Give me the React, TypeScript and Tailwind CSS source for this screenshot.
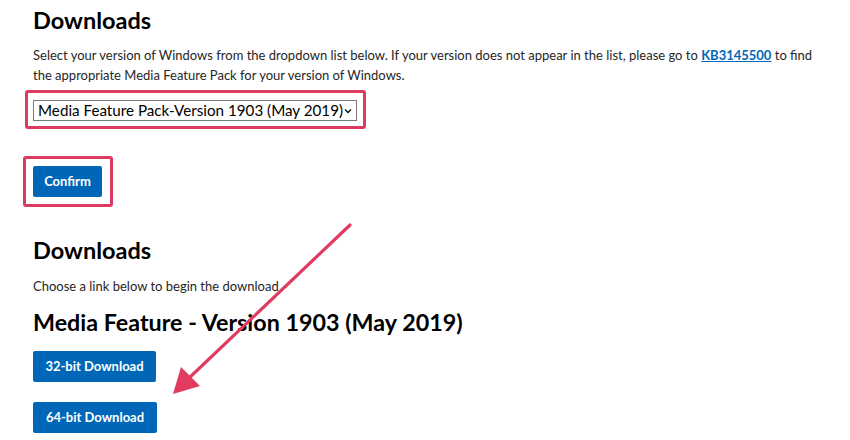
import React from 'react';

const font = { fontFamily: 'Lato, "Open Sans", sans-serif' };

function BlueButton({ label, width }: { label: string; width: string }) {
  return (
    <button
      className={`${width} h-[31px] bg-[#0067b8] text-white text-[13px] font-bold rounded-[2px] flex items-center justify-center`}
    >
      {label}
    </button>
  );
}

export default function App() {
  return (
    <div className="relative w-[850px] h-[440px] bg-white overflow-hidden text-[#1b1b1b]" style={font}>
      <div className="pl-[33px] flex flex-col items-start">
        {/* Downloads / version picker */}
        <h2 className="mt-[6px] text-[23.5px] leading-[28px] font-bold text-black">Downloads</h2>
        <p className="mt-[11px] text-[13px] leading-[20px] text-[#262626] whitespace-nowrap">
          Select your version of Windows from the dropdown list below. If your version does not appear in the list, please go to{' '}
          <a className="text-[#0067b8] font-bold underline">KB3145500</a> to find
          <br />
          the appropriate Media Feature Pack for your version of Windows.
        </p>

        <div className="mt-[5px] -ml-[8px] border-[3px] border-[#dc3a5f] rounded-[3px] pl-[5px] pr-[6px] pt-[7px] pb-[5px]">
          <div className="w-[324px] h-[21px] border border-[#7a7a7a] flex items-center justify-between pl-[4px] pr-[4px] text-[15.2px] text-black">
            <span className="whitespace-nowrap">Media Feature Pack-Version 1903 (May 2019)</span>
            <svg width="8" height="6" viewBox="0 0 8 6" className="shrink-0">
              <path d="M1 1.5 L4 4.5 L7 1.5" fill="none" stroke="#111" strokeWidth="1.4" />
            </svg>
          </div>
        </div>

        <div className="mt-[27px] -ml-[10px] border-[3px] border-[#dc3a5f] rounded-[3px] pl-[7px] pr-[8px] pt-[7px] pb-[7px]">
          <BlueButton label="Confirm" width="w-[69px]" />
        </div>

        {/* Download links */}
        <h2 className="mt-[29px] text-[23.5px] leading-[28px] font-bold text-black">Downloads</h2>
        <p className="mt-[12px] text-[13px] leading-[20px] text-[#262626]">Choose a link below to begin the download</p>
        <h3 className="mt-[11px] text-[23.3px] leading-[30px] font-bold text-black">
          Media Feature - Version 1903 (May 2019)
        </h3>
        <div className="mt-[14px]">
          <BlueButton label="32-bit Download" width="w-[123px]" />
        </div>
        <div className="mt-[20px]">
          <BlueButton label="64-bit Download" width="w-[124px]" />
        </div>
      </div>

      {/* annotation arrow */}
      <svg className="absolute inset-0 pointer-events-none" width="850" height="440">
        <line x1="350" y1="225" x2="188" y2="379" stroke="#e23b62" strokeWidth="3.2" strokeLinecap="round" />
        <polygon points="173,394 181,367 200,386" fill="#e23b62" />
      </svg>
    </div>
  );
}
